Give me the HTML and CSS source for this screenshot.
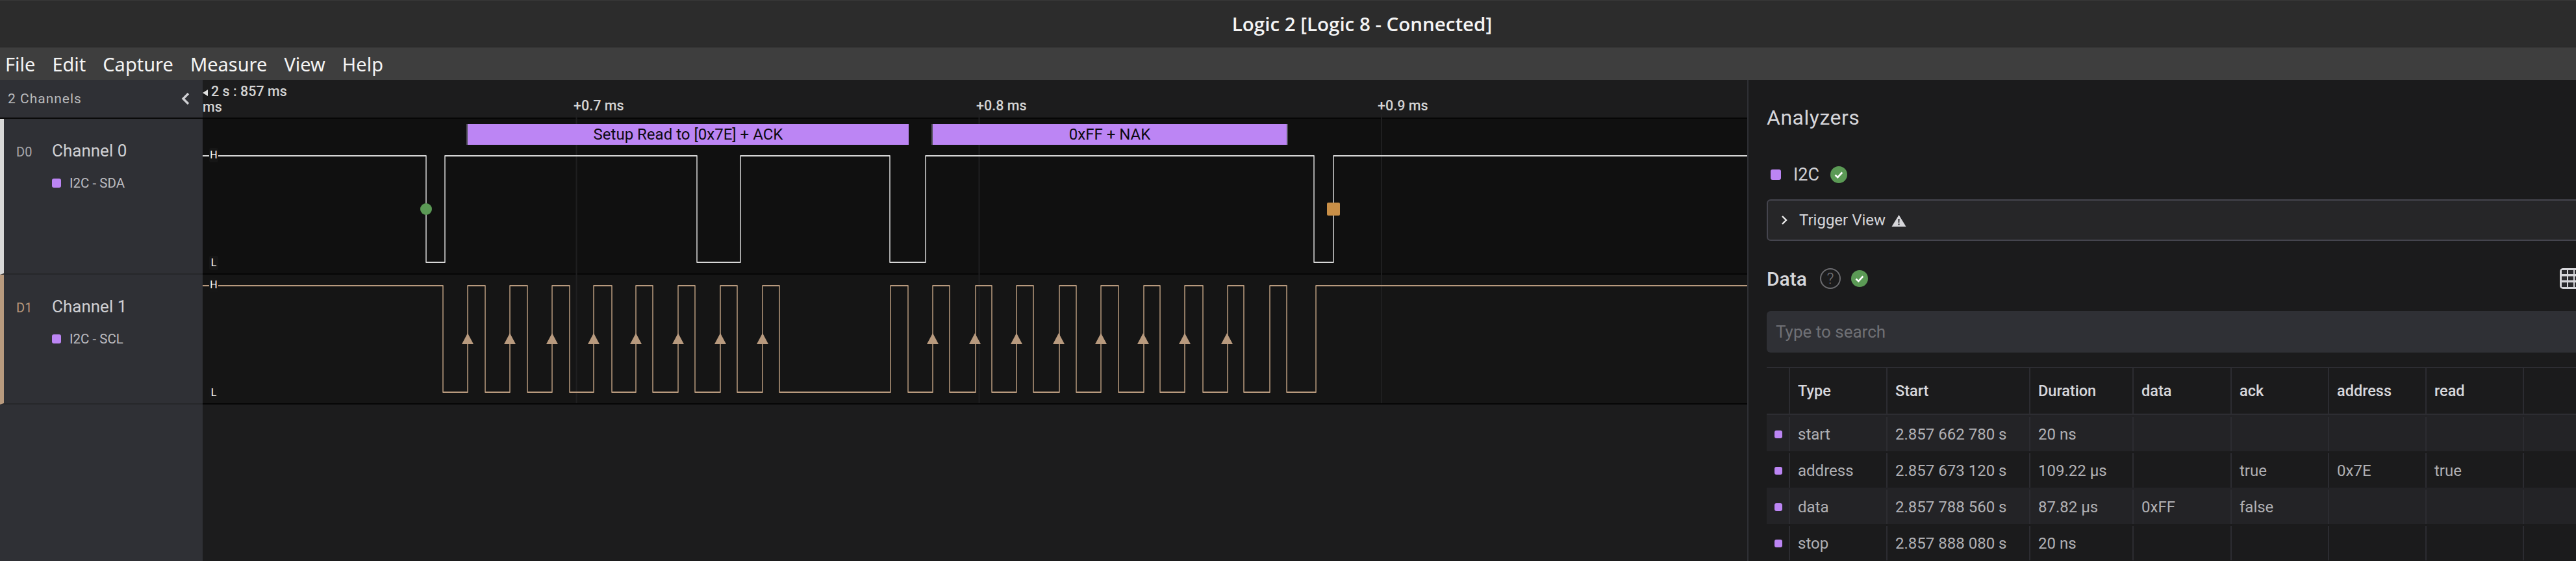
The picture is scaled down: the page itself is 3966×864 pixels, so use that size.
FILE: index.html
```html
<!DOCTYPE html>
<html>
<head>
    <meta charset="utf-8">
    <title>Logic 2</title>
    <link rel="stylesheet" href="styles.css">
</head>
<body>
<div class="titlebar">Logic 2 [Logic 8 - Connected]</div>

<div class="menubar">
    <span>File</span>
    <span>Edit</span>
    <span>Capture</span>
    <span>Measure</span>
    <span>View</span>
    <span>Help</span>
</div>

<div class="workspace">
    <div class="sidebar">
        <div class="sidebar-head">
            <span>2 Channels</span>
            <svg class="collapse" width="14" height="20" viewBox="0 0 14 20"><path d="M11 2L3 10l8 8" fill="none" stroke="#d0d0d4" stroke-width="3.4"/></svg>
        </div>
        <div class="channel channel-0">
            <div class="channel-name"><span class="channel-id">D0</span>Channel 0</div>
            <div class="channel-tag"><i class="swatch"></i>I2C - SDA</div>
        </div>
        <div class="channel channel-1">
            <div class="channel-name"><span class="channel-id">D1</span>Channel 1</div>
            <div class="channel-tag"><i class="swatch"></i>I2C - SCL</div>
        </div>
    </div>

    <div class="timeline">
        <div class="ruler">
            <div class="ruler-origin"><i class="ruler-arrow"></i>2 s : 857 ms<br>ms</div>
            <span class="tick-label tick-7">+0.7 ms</span>
            <span class="tick-label tick-8">+0.8 ms</span>
            <span class="tick-label tick-9">+0.9 ms</span>
        </div>
        <div class="lane lane-0">
            <div class="bubble bubble-a">Setup Read to [0x7E] + ACK</div>
            <div class="bubble bubble-b">0xFF + NAK</div>
            <span class="level level-h">H</span>
            <span class="level level-l">L</span>
        </div>
        <div class="lane lane-1">
            <span class="level level-h">H</span>
            <span class="level level-l">L</span>
        </div>

        <!-- viewBox uses page coordinates so the edges can be read straight off the capture -->
        <svg class="traces" width="2378" height="741" viewBox="312 123 2378 741">
            <path class="tick" d="M887.5 175V621M1507.5 175V621M2127 175V621"/>

            <path class="edge edge-0" d="M656 240V404M685 240V404M1073 240V404M1140 240V404M1370 240V404M1425 240V404M2023 240V404M2053 240V404"/>
            <path class="run run-0" d="M312 240H656M685 240H1073M1140 240H1370M1425 240H2023M2053 240H2690M656 404H685M1073 404H1140M1370 404H1425M2023 404H2053"/>
            <circle cx="656" cy="322" r="9" fill="#5b9a55"/>
            <rect x="2043" y="312" width="20" height="20" rx="2" fill="#c98f47"/>

            <path class="edge edge-1" d="M682 440V604M720 440V604M747 440V604M785 440V604M812 440V604M850 440V604M877 440V604M914 440V604M942 440V604M979 440V604M1005 440V604M1044 440V604M1070 440V604M1109 440V604M1135 440V604M1174 440V604M1200 440V604M1371 440V604M1398 440V604M1436 440V604M1462 440V604M1502 440V604M1527 440V604M1565 440V604M1591 440V604M1631 440V604M1657 440V604M1695 440V604M1722 440V604M1761 440V604M1786 440V604M1824 440V604M1852 440V604M1890 440V604M1915 440V604M1955 440V604M1981 440V604M2026 440V604"/>
            <path class="run run-1" d="M312 440H682M720 440H747M785 440H812M850 440H877M914 440H942M979 440H1005M1044 440H1070M1109 440H1135M1174 440H1200M1371 440H1398M1436 440H1462M1502 440H1527M1565 440H1591M1631 440H1657M1695 440H1722M1761 440H1786M1824 440H1852M1890 440H1915M1955 440H1981M2026 440H2690M682 604H720M747 604H785M812 604H850M877 604H914M942 604H979M1005 604H1044M1070 604H1109M1135 604H1174M1200 604H1371M1398 604H1436M1462 604H1502M1527 604H1565M1591 604H1631M1657 604H1695M1722 604H1761M1786 604H1824M1852 604H1890M1915 604H1955M1981 604H2026"/>
            <path class="arrows" d="M711 530l9-17 9 17zM776 530l9-17 9 17zM841 530l9-17 9 17zM905 530l9-17 9 17zM970 530l9-17 9 17zM1035 530l9-17 9 17zM1100 530l9-17 9 17zM1165 530l9-17 9 17zM1427 530l9-17 9 17zM1492 530l9-17 9 17zM1556 530l9-17 9 17zM1621 530l9-17 9 17zM1686 530l9-17 9 17zM1751 530l9-17 9 17zM1815 530l9-17 9 17zM1880 530l9-17 9 17z"/>
        </svg>
    </div>

    <div class="panel">
        <h2 class="panel-title">Analyzers</h2>

        <div class="analyzer">
            <i class="swatch swatch-big"></i>
            <span>I2C</span>
            <svg width="26" height="26" viewBox="0 0 26 26"><circle cx="13" cy="13" r="13" fill="#5b9a55"/><path d="M7.5 13.5l3.8 3.6 7-7.6" fill="none" stroke="#fff" stroke-width="2.6"/></svg>
        </div>

        <div class="trigger">
            <svg width="11" height="16" viewBox="0 0 11 16"><path d="M2 2l6 6-6 6" fill="none" stroke="#f0f0f0" stroke-width="2.4"/></svg>
            <span>Trigger View</span>
            <svg class="warn" width="23" height="19" viewBox="0 0 23 19"><path d="M11.5 1L22.5 19H.5z" fill="#d6d6da"/><path d="M10.4 7h2.2l-.3 6h-1.6zM10.4 14.4h2.2v2.2h-2.2z" fill="#26262a"/></svg>
            <i class="trigger-more"></i>
        </div>

        <div class="data-head">
            <span class="data-title">Data</span>
            <span class="help">?</span>
            <svg width="26" height="26" viewBox="0 0 26 26"><circle cx="13" cy="13" r="13" fill="#5b9a55"/><path d="M7.5 13.5l3.8 3.6 7-7.6" fill="none" stroke="#fff" stroke-width="2.6"/></svg>
            <svg class="grid-icon" width="34" height="32" viewBox="0 0 34 32"><rect width="34" height="32" rx="5" fill="#d6d6da"/><path d="M3 3h8v6H3zM13 3h8v6h-8zM23 3h8v6h-8zM3 12.500h8v6H3zM13 12.500h8v6h-8zM23 12.500h8v6h-8zM3 22h8v7H3zM13 22h8v7h-8zM23 22h8v7h-8z" fill="#2a2a2e"/></svg>
        </div>

        <div class="search">Type to search</div>

        <div class="table">
            <div class="row row-head">
                <div></div><div>Type</div><div>Start</div><div>Duration</div><div>data</div><div>ack</div><div>address</div><div>read</div><div></div>
            </div>
            <div class="row">
                <div><i class="swatch swatch-row"></i></div><div>start</div><div>2.857 662 780 s</div><div>20 ns</div><div></div><div></div><div></div><div></div><div></div>
            </div>
            <div class="row">
                <div><i class="swatch swatch-row"></i></div><div>address</div><div>2.857 673 120 s</div><div>109.22 µs</div><div></div><div>true</div><div>0x7E</div><div>true</div><div></div>
            </div>
            <div class="row">
                <div><i class="swatch swatch-row"></i></div><div>data</div><div>2.857 788 560 s</div><div>87.82 µs</div><div>0xFF</div><div>false</div><div></div><div></div><div></div>
            </div>
            <div class="row">
                <div><i class="swatch swatch-row"></i></div><div>stop</div><div>2.857 888 080 s</div><div>20 ns</div><div></div><div></div><div></div><div></div><div></div>
            </div>
        </div>
    </div>
</div>
</body>
</html>
```

FILE: styles.css
```css
* {
    box-sizing: border-box;
}

html, body {
    margin: 0;
    height: 864px;
    overflow: hidden;
}

body {
    width: 3966px;
    background: #1c1c1d;
    font-family: 'Roboto', sans-serif;
    color: #d6d6da;
}

/* the real window is wider than the capture, so the title sits right of centre */
.titlebar {
    height: 73px;
    line-height: 71px;
    padding-left: 228px;
    text-align: center;
    background: #2c2c2c;
    border-top: 1px solid #383838;
    border-bottom: 1px solid #252525;
    color: #f4f4f4;
    font-family: 'Open Sans', 'Noto Sans', sans-serif;
    font-weight: 600;
    font-size: 29.5px;
}

.menubar {
    height: 50px;
    display: flex;
    align-items: center;
    gap: 26px;
    padding-left: 8px;
    background: #3e3e3e;
    color: #f4f4f4;
    font-family: 'Noto Sans', sans-serif;
    font-size: 29px;
}

.workspace {
    height: 741px;
    display: flex;
}

/* left column with channel names */
.sidebar {
    width: 312px;
    flex: none;
    background: #2f3035;
}

.sidebar-head {
    height: 60px;
    padding: 0 19px 0 12px;
    display: flex;
    align-items: center;
    justify-content: space-between;
    border-bottom: 2px solid #0a0a0a;
    font-size: 21px;
    letter-spacing: 1px;
    color: #b9babd;
}

.channel {
    padding-top: 34px;
    border-left: 6px solid;
    border-bottom: 2px solid #26272a;
}

.channel-0 {
    height: 240px;
    border-left-color: #d8d8d8;
}

.channel-1 {
    height: 200px;
    border-left-color: #b89a7e;
}

.channel-name {
    display: flex;
    align-items: baseline;
    height: 34px;
    font-size: 26px;
    color: #d0d0d4;
}

.channel-id {
    width: 74px;
    padding-left: 19px;
    font-size: 20px;
    color: #a8a8ac;
}

.channel-1 .channel-id {
    color: #b89a7e;
}

.channel-tag {
    display: flex;
    align-items: center;
    height: 30px;
    margin-top: 16px;
    padding-left: 74px;
    font-size: 20.5px;
    color: #bcbcc0;
}

.swatch {
    display: block;
    width: 14px;
    height: 14px;
    margin-right: 13px;
    border-radius: 3px;
    background: #bc85f4;
}

/* waveform area */
.timeline {
    position: relative;
    width: 2378px;
    flex: none;
    overflow: hidden;
}

.ruler {
    position: relative;
    height: 60px;
    background: #1c1c1d;
    border-bottom: 2px solid #060606;
    font-size: 21.5px;
    font-weight: 500;
    color: #d4d4d4;
}

.ruler-origin {
    padding-top: 6px;
    line-height: 24px;
}

.ruler-arrow {
    display: inline-block;
    margin-right: 5px;
    border-style: solid;
    border-width: 5px 8px 5px 0;
    border-color: transparent #e0e0e0 transparent transparent;
}

.tick-label {
    position: absolute;
    top: 28px;
    line-height: 24px;
}

.tick-7 { left: 571px; }
.tick-8 { left: 1191px; }
.tick-9 { left: 1809px; }

.lane {
    position: relative;
    border-bottom: 2px solid #060606;
}

.lane-0 {
    height: 240px;
    background: #101010;
}

.lane-1 {
    height: 200px;
    background: #151515;
}

.traces {
    position: absolute;
    left: 0;
    top: 0;
    fill: none;
}

.tick {
    stroke: #1f1f20;
    stroke-width: 2;
}

.edge {
    stroke-width: 1.5;
    stroke-linecap: square;
}

.run {
    stroke-width: 2;
}

.edge-0, .run-0 {
    stroke: #d8d8d8;
}

.edge-1, .run-1 {
    stroke: #b89a7e;
}

.arrows {
    fill: #b89a7e;
}

.bubble {
    position: absolute;
    z-index: 1;
    top: 8px;
    height: 32px;
    line-height: 32px;
    text-align: center;
    font-size: 24px;
    background: #bc85f4;
    color: #0c0a10;
    border-style: solid;
    border-color: #50505a;
    border-width: 0 2px;
}

.bubble-a {
    left: 406px;
    width: 681px;
    border-right-width: 0;
}

.bubble-b {
    left: 1122px;
    width: 549px;
}

.level {
    position: absolute;
    z-index: 1;
    left: 10px;
    width: 14px;
    height: 22px;
    line-height: 22px;
    text-align: center;
    font-size: 16px;
    border-radius: 3px;
    color: #fff;
    background: #161616;
}

.lane-0 .level-h { top: 45px; }
.lane-0 .level-l { top: 211px; }
.lane-1 .level-h { top: 5px; }
.lane-1 .level-l { top: 171px; }

/* right panel, wider than the window so it runs off the edge */
.panel {
    width: 1320px;
    flex: none;
    padding: 0 0 0 28px;
    border-left: 2px solid #2f3035;
    background: #1b1b1c;
    height: 741px;
    overflow: hidden;
}

.panel-title {
    margin: 30px 0 0;
    height: 56px;
    line-height: 56px;
    font-size: 32px;
    letter-spacing: .5px;
    font-weight: 400;
    color: #d6d6da;
}

.analyzer {
    margin-top: 40px;
    height: 40px;
    padding-left: 6px;
    display: flex;
    align-items: center;
    font-size: 27px;
    color: #d0d0d4;
}

.swatch-big {
    width: 16px;
    height: 16px;
    margin-right: 19px;
}

.analyzer span {
    margin-right: 17px;
}

.trigger {
    margin-top: 18px;
    height: 64px;
    padding: 0 7px 0 20px;
    display: flex;
    align-items: center;
    gap: 8px;
    border: 2px solid #45454e;
    border-radius: 6px;
    background: #262628;
    font-size: 24px;
    color: #d6d6da;
}

.trigger span {
    margin-left: 9px;
}

.warn {
    margin-left: 1px;
}

.trigger-more {
    display: block;
    width: 24px;
    height: 24px;
    margin-left: auto;
    border: 2px solid #6c6c70;
    border-radius: 50%;
}

.data-head {
    margin-top: 42px;
    height: 32px;
    display: flex;
    align-items: center;
}

.data-title {
    width: 82px;
    font-size: 30px;
    font-weight: 500;
    color: #d6d6da;
}

.help {
    width: 32px;
    height: 32px;
    margin-right: 16px;
    line-height: 28px;
    text-align: center;
    border: 2px solid #6c6c70;
    border-radius: 50%;
    font-size: 24px;
    font-weight: 300;
    color: #77777c;
}

.grid-icon {
    margin-left: auto;
    margin-right: 35px;
}

.search {
    margin-top: 34px;
    height: 64px;
    line-height: 64px;
    padding-left: 14px;
    border-radius: 6px;
    background: #2f3035;
    font-size: 26px;
    color: #6f7075;
}

.table {
    margin-top: 22px;
    border-top: 2px solid #2d2d32;
}

.row {
    display: grid;
    grid-template-columns: 36px 150px 220px 159px 151px 150px 150px 150px 1fr;
    height: 56px;
    padding-top: 3px;
    font-size: 24px;
    color: #b0b0b4;
}

.row:nth-child(even) {
    background: #232326;
}

.row > div {
    display: flex;
    align-items: center;
    padding-left: 12px;
    border-right: 2px solid #2c2c31;
}

.row-head {
    height: 72px;
    padding-top: 0;
    border-bottom: 2px solid #2d2d32;
    font-size: 23.5px;
    font-weight: 500;
    color: #d8d8dc;
}

.swatch-row {
    width: 12px;
    height: 12px;
    margin: 0;
}
```
